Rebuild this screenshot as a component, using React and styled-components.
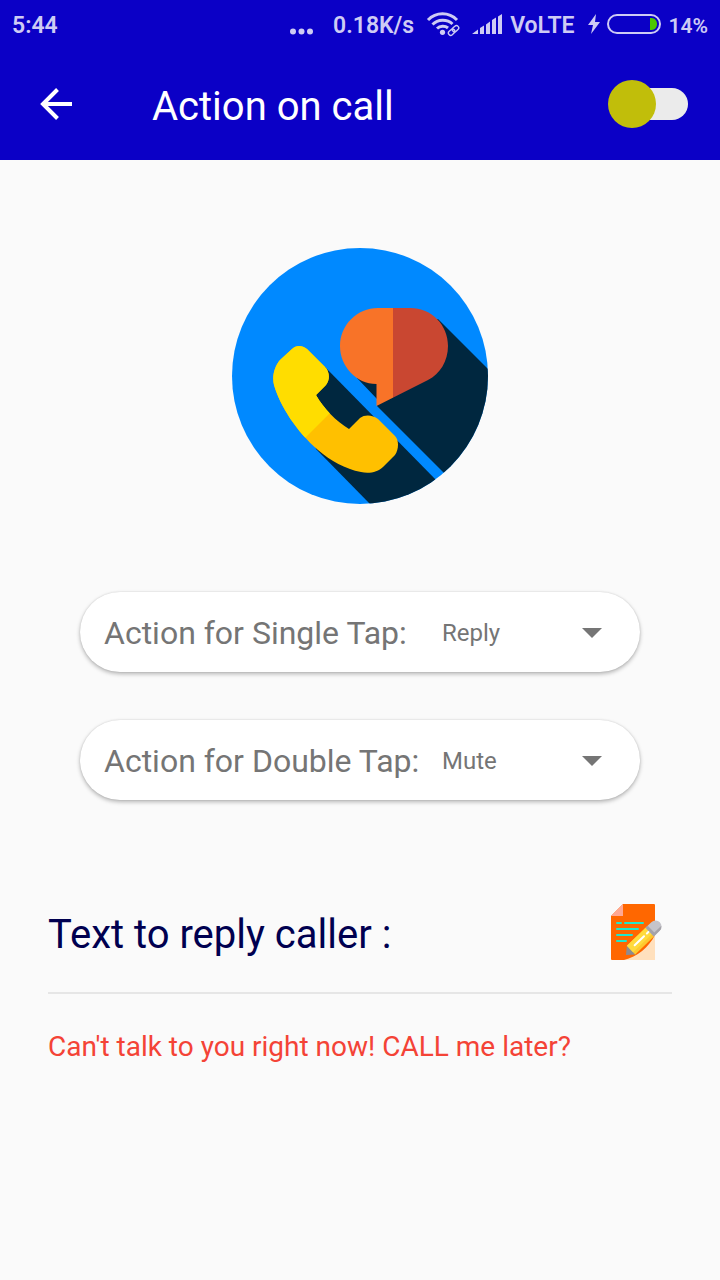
import React, { useState } from "react";
import styled, { createGlobalStyle } from "styled-components";

const GlobalStyle = createGlobalStyle`
  *, *::before, *::after { box-sizing: border-box; }
  body {
    margin: 0;
    background: #fafafa;
    font-family: Roboto, "Liberation Sans", sans-serif;
  }
`;

const Screen = styled.div`
  min-height: 100vh;
`;

const Header = styled.header`
  background: #0b00c6;
`;

const StatusBar = styled.div`
  display: flex;
  align-items: center;
  justify-content: space-between;
  height: 48px;
  padding: 0 12px;
  color: #cecbf4;
`;

const StatusText = styled.span`
  padding-top: 3px;
  font-size: ${(p) => (p.$small ? 21 : 23)}px;
  line-height: 26px;
  font-weight: 600;
`;

const StatusGroup = styled.div`
  display: flex;
  align-items: center;
  gap: ${(p) => p.$gap || 0}px;
`;

const StatusIcon = styled.svg`
  display: block;
  flex: none;
`;

const AppBar = styled.div`
  display: flex;
  align-items: center;
  height: 112px;
  padding: 0 32px;
`;

const IconButton = styled.button`
  display: flex;
  align-items: center;
  justify-content: center;
  flex: none;
  width: ${(p) => p.$width}px;
  height: ${(p) => p.$height}px;
  padding: 0;
  border: 0;
  background: none;
  cursor: pointer;
`;

const Title = styled.h1`
  flex: 1;
  margin: 0;
  padding: 6px 0 0 72px;
  color: #fff;
  font-size: 40px;
  line-height: 48px;
  font-weight: 400;
`;

const Switch = styled.input`
  appearance: none;
  position: relative;
  display: flex;
  align-items: center;
  flex: none;
  width: 80px;
  height: 48px;
  margin: 0;
  padding-left: 8px;
  cursor: pointer;

  &::before {
    content: "";
    flex: 1;
    height: 32px;
    border-radius: 16px;
    background: #ebebeb;
  }

  &::after {
    content: "";
    position: absolute;
    top: 0;
    left: ${(p) => (p.checked ? "32px" : "0")};
    width: 48px;
    height: 48px;
    border-radius: 50%;
    background: #c1be0a;
  }
`;

const Hero = styled.div`
  display: flex;
  justify-content: center;
  padding: 88px 0;
`;

const Actions = styled.section`
  display: flex;
  flex-direction: column;
  gap: 48px;
  padding: 0 80px;
`;

const ActionCard = styled.div`
  display: flex;
  align-items: center;
  height: 80px;
  padding: 0 36px 0 24px;
  border-radius: 40px;
  background: #fff;
  box-shadow: 0 2px 4px rgba(0, 0, 0, 0.28), 0 0 2px rgba(0, 0, 0, 0.12);
  color: #757575;
`;

const ActionLabel = styled.label`
  flex: none;
  width: 338px;
  padding-top: 2px;
  font-size: 32px;
  line-height: 40px;
  white-space: nowrap;
`;

const SelectField = styled.div`
  display: grid;
  flex: 1;
  align-items: center;

  & > * {
    grid-area: 1 / 1;
  }
`;

const Select = styled.select`
  appearance: none;
  width: 100%;
  height: 48px;
  padding: 2px 0 0;
  border: 0;
  background: none;
  color: inherit;
  font: 24px/32px Roboto, "Liberation Sans", sans-serif;
`;

const Caret = styled.svg`
  justify-self: end;
  pointer-events: none;
`;

const ReplySection = styled.section`
  padding: 104px 48px 0;
`;

const ReplyHeader = styled.div`
  display: flex;
  align-items: center;
  justify-content: space-between;
  padding: 0 8px 32px 0;
  border-bottom: 2px solid #e6e6e6;
`;

const ReplyTitle = styled.h2`
  margin: 0;
  padding-top: 6px;
  color: #000050;
  font-size: 40px;
  line-height: 48px;
  font-weight: 400;
`;

const ReplyText = styled.p`
  margin: 36px 0 0;
  color: #f44336;
  font-size: 28px;
  line-height: 34px;
`;

function WifiIcon() {
  return (
    <StatusIcon width="34" height="26" viewBox="0 0 34 26" fill="none" stroke="currentColor" aria-hidden="true">
      <path d="M2 9C10 0.800 23 0.800 31 9" strokeWidth="3" />
      <path d="M6.500 13.500C12 8 21 8 26.500 13" strokeWidth="3" />
      <path d="M11 17.500C14 14.700 19 14.500 22 17" strokeWidth="3" />
      <circle cx="16.500" cy="21.300" r="2.600" fill="currentColor" stroke="none" />
      <g strokeWidth="1.400" transform="rotate(-42 27.500 19.500)">
        <rect x="21.500" y="17.200" width="7" height="4.600" rx="2.300" />
        <rect x="26.700" y="17.200" width="7" height="4.600" rx="2.300" />
      </g>
    </StatusIcon>
  );
}

function SignalIcon() {
  return (
    <StatusIcon width="30" height="20" viewBox="0 0 30 20" fill="currentColor" aria-hidden="true">
      <path d="M0 20L6 15.500V20ZM8 14L12 11.500V20H8ZM14 10.500L18 7.500V20H14ZM20 6L24 3.500V20H20ZM26 2.500L30 0V20H26Z" />
    </StatusIcon>
  );
}

function BatteryIcon() {
  return (
    <StatusIcon width="54" height="20" viewBox="0 0 54 20" fill="none" aria-hidden="true">
      <rect x="1" y="1" width="52" height="18" rx="9" stroke="currentColor" strokeWidth="2" />
      <path d="M43 4H44.500C48 4 50 7 50 10S48 16 44.500 16H43Z" fill="#4cc800" />
    </StatusIcon>
  );
}

function CallLogo() {
  return (
    <svg width="256" height="256" viewBox="0 0 256 256" role="img" aria-label="Call and message">
      <defs>
        <clipPath id="disc">
          <circle cx="128" cy="128" r="128" />
        </clipPath>
        <clipPath id="bubble">
          <path d="M146 60H178C200 60 216 77 216 98C216 113 208 126 196 132L144.500 158V136C124 136 108 118 108 98C108 77 125 60 146 60Z" />
        </clipPath>
        <clipPath id="phone">
          <path d="M60 101C64 97 70 97 75 101L93 119C98 124 98 132 94 137L84 147C92 161 104 173 117 181L128 170C133 166 141 167 146 171L163 188C167 192 167 201 163 207L151 219C146 224 137 226 129 224C113 221 99 213 86 202C65 184 48 158 42 137C40 129 42 119 48 112Z" />
        </clipPath>
      </defs>
      <g clipPath="url(#disc)">
        <rect width="256" height="256" fill="#0089ff" />
        <path d="M206 71L260 125V273L145 158V151L125 130L150 100Z" fill="#00273f" />
        <path d="M93 119L206 234V256H138L84 201L70 150Z" fill="#00273f" />
      </g>
      <g clipPath="url(#bubble)">
        <rect x="100" y="50" width="61" height="120" fill="#f87328" />
        <rect x="161" y="50" width="60" height="120" fill="#c94731" />
      </g>
      <g clipPath="url(#phone)">
        <rect x="30" y="90" width="145" height="140" fill="#ffc000" />
        <path d="M20 243L20 80H183Z" fill="#ffdd00" />
      </g>
    </svg>
  );
}

function EditNoteIcon() {
  return (
    <svg width="56" height="56" viewBox="0 0 56 56" aria-hidden="true">
      <path d="M15 0H46Q47 0 47 1V56H4Q3 56 3 55V12Z" fill="#ff6700" />
      <path d="M47 31V56H16C29 53 41 43 47 31Z" fill="#ffe0bd" />
      <path d="M15 0V12H3Z" fill="#ffa894" />
      <path d="M9 19H13M17 19H35M9 25H30M9 31H24M9 37H18" stroke="#22e6cb" strokeWidth="2" strokeLinecap="round" fill="none" />
      <g transform="translate(18 51) rotate(-44)">
        <path d="M0 0L7 -6L10 0L7 6Z" fill="#8d8b91" />
        <path d="M7 -6H33V6H7Z" fill="#fdc92f" />
        <path d="M7 -6H33V3H7Z" fill="#ffda3d" />
        <path d="M33 -6H41A6 6 0 0 1 41 6H33Z" fill="#c5c4ca" />
        <path d="M33 -6H36V6H33ZM33 3.500H45.800Q44 6 41 6H33Z" fill="#a5a3a9" />
        <path d="M13 -1H26M30 -1H32" stroke="#fff" strokeWidth="2" strokeLinecap="round" />
      </g>
    </svg>
  );
}

function ActionRow({ id, label, value, options }) {
  return (
    <ActionCard>
      <ActionLabel htmlFor={id}>{label}</ActionLabel>
      <SelectField>
        <Select id={id} defaultValue={value}>
          {options.map((o) => (
            <option key={o}>{o}</option>
          ))}
        </Select>
        <Caret width="24" height="12" viewBox="0 0 24 12" aria-hidden="true">
          <path d="M2 2H22L12 12Z" fill="#757575" />
        </Caret>
      </SelectField>
    </ActionCard>
  );
}

export default function App() {
  const [enabled, setEnabled] = useState(false);
  return (
    <Screen>
      <GlobalStyle />
      <Header>
        <StatusBar>
          <StatusText>5:44</StatusText>
          <StatusGroup $gap={8}>
            <StatusGroup $gap={12}>
              <StatusGroup $gap={18}>
                <StatusIcon width="26" height="26" viewBox="0 0 26 26" fill="currentColor" aria-hidden="true">
                  <circle cx="4" cy="20.500" r="3" />
                  <circle cx="12.500" cy="20.500" r="3" />
                  <circle cx="21" cy="20.500" r="3" />
                </StatusIcon>
                <StatusText>0.18K/s</StatusText>
              </StatusGroup>
              <WifiIcon />
              <StatusGroup $gap={8}>
                <SignalIcon />
                <StatusText>VoLTE</StatusText>
              </StatusGroup>
              <StatusGroup $gap={6}>
                <StatusIcon width="14" height="22" viewBox="0 0 14 22" fill="currentColor" aria-hidden="true">
                  <path d="M9 1L1 12H6L4 21L13 9H8Z" />
                </StatusIcon>
                <BatteryIcon />
              </StatusGroup>
            </StatusGroup>
            <StatusText $small>14%</StatusText>
          </StatusGroup>
        </StatusBar>
        <AppBar>
          <IconButton type="button" aria-label="Back" $width={48} $height={48}>
            <svg width="32" height="32" viewBox="0 0 32 32" fill="none" stroke="#fff" strokeWidth="4" aria-hidden="true">
              <path d="M32 16H3M17.500 1.500L3 16L17.500 30.500" />
            </svg>
          </IconButton>
          <Title>Action on call</Title>
          <Switch
            type="checkbox"
            role="switch"
            aria-label="Enable action on call"
            checked={enabled}
            onChange={(e) => setEnabled(e.target.checked)}
          />
        </AppBar>
      </Header>
      <main>
        <Hero>
          <CallLogo />
        </Hero>
        <Actions>
          <ActionRow id="single-tap" label="Action for Single Tap:" value="Reply" options={["Reply", "Mute"]} />
          <ActionRow id="double-tap" label="Action for Double Tap:" value="Mute" options={["Reply", "Mute"]} />
        </Actions>
        <ReplySection>
          <ReplyHeader>
            <ReplyTitle>Text to reply caller :</ReplyTitle>
            <IconButton type="button" aria-label="Edit reply text" $width={56} $height={56}>
              <EditNoteIcon />
            </IconButton>
          </ReplyHeader>
          <ReplyText>Can't talk to you right now! CALL me later?</ReplyText>
        </ReplySection>
      </main>
    </Screen>
  );
}
